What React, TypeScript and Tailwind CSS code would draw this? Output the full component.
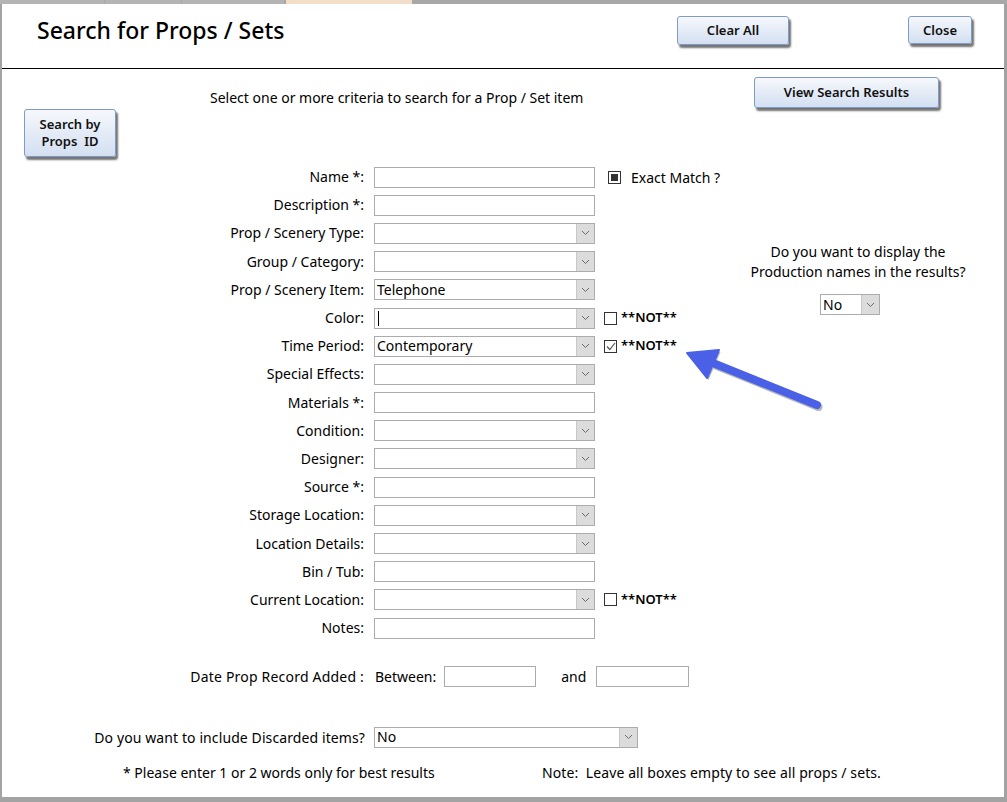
import React from 'react';

const font = "font-['Noto_Sans',sans-serif]";

function Chevron() {
  return (
    <svg width="9" height="6" viewBox="0 0 9 6" fill="none" stroke="#6b6b6b" strokeWidth="1">
      <path d="M1 1l3.5 3.5L8 1" />
    </svg>
  );
}

function TextBox({ w = 221 }: { w?: number }) {
  return <div className="h-[21px] border border-[#acacac] bg-white" style={{ width: w }} />;
}

function SelectBox({ w = 221, value, caret }: { w?: number; value?: string; caret?: boolean }) {
  return (
    <div className="flex h-[21px] border border-[#acacac] bg-white" style={{ width: w }}>
      <div className="flex flex-1 items-center pl-[2px] text-[14px] leading-none text-black">
        {caret && <span className="ml-[1px] h-[15px] w-px bg-black" />}
        {value}
      </div>
      <div className="flex w-[18px] items-center justify-center border-l border-[#c8c8c8] bg-[#dcdcdc]">
        <Chevron />
      </div>
    </div>
  );
}

function NotBox({ checked }: { checked?: boolean }) {
  return (
    <div className="ml-[9px] flex items-center gap-[4px]">
      <div className="flex h-[13px] w-[13px] items-center justify-center border border-[#333] bg-white">
        {checked && (
          <svg width="10" height="9" viewBox="0 0 10 9" fill="none" stroke="#555" strokeWidth="1.2">
            <path d="M1 4.5l2.8 3L9 1" />
          </svg>
        )}
      </div>
      <span className="text-[13px] font-semibold text-black">**NOT**</span>
    </div>
  );
}

function Btn({ children, className }: { children: React.ReactNode; className?: string }) {
  return (
    <div
      className={
        'flex items-center justify-center rounded-[3px] border border-[#7f9cc8] bg-linear-to-b from-[#f6f8fc] to-[#d3dff1] text-center text-[13px] font-semibold leading-[17px] text-[#111] shadow-[2px_3px_2px_rgba(0,0,0,0.55)] ' +
        (className ?? '')
      }
    >
      {children}
    </div>
  );
}

type RowDef = { label: string; kind: 'text' | 'select'; value?: string; extra?: 'exact' | 'not' | 'notChecked'; caret?: boolean };

const rows: RowDef[] = [
  { label: 'Name *:', kind: 'text', extra: 'exact' },
  { label: 'Description *:', kind: 'text' },
  { label: 'Prop / Scenery Type:', kind: 'select' },
  { label: 'Group / Category:', kind: 'select' },
  { label: 'Prop / Scenery Item:', kind: 'select', value: 'Telephone' },
  { label: 'Color:', kind: 'select', extra: 'not', caret: true },
  { label: 'Time Period:', kind: 'select', value: 'Contemporary', extra: 'notChecked' },
  { label: 'Special Effects:', kind: 'select' },
  { label: 'Materials *:', kind: 'text' },
  { label: 'Condition:', kind: 'select' },
  { label: 'Designer:', kind: 'select' },
  { label: 'Source *:', kind: 'text' },
  { label: 'Storage Location:', kind: 'select' },
  { label: 'Location Details:', kind: 'select' },
  { label: 'Bin / Tub:', kind: 'text' },
  { label: 'Current Location:', kind: 'select', extra: 'not' },
  { label: 'Notes:', kind: 'text' },
];

export default function App() {
  return (
    <div className={`relative flex h-[802px] w-[1007px] flex-col overflow-hidden bg-white text-[14px] text-black ${font}`}>
      {/* tab strip */}
      <div className="flex h-[4px] bg-[#a8a8a8]">
        <div className="w-[104px] bg-[#b4b4b4]" />
        <div className="ml-[1px] w-[76px] bg-[#b4b4b4]" />
        <div className="ml-[1px] w-[102px] bg-[#b4b4b4]" />
        <div className="ml-[2px] w-[126px] bg-[#f3dfc7]" />
      </div>

      <div className="flex flex-1 flex-col border-x-2 border-b-[5px] border-[#a3a3a3] border-r-[3px]">
        {/* header */}
        <div className="flex h-[65px] items-start border-b border-black">
          <h1 className="pl-[35px] pt-[11px] text-[23px] font-medium leading-[30px]">Search for Props / Sets</h1>
          <div className="flex-1" />
          <Btn className="mt-[12px] h-[29px] w-[112px]">Clear All</Btn>
          <Btn className="ml-[119px] mr-[32px] mt-[12px] h-[28px] w-[64px]">Close</Btn>
        </div>

        {/* intro */}
        <div className="grid h-[94px] grid-cols-[208px_544px_auto]">
          <div>
            <Btn className="ml-[22px] mt-[40px] h-[48px] w-[92px]">
              Search by
              <br />
              Props&nbsp; ID
            </Btn>
          </div>
          <div className="pt-[19px] leading-[20px]">Select one or more criteria to search for a Prop / Set item</div>
          <div>
            <Btn className="mt-[8px] h-[31px] w-[185px]">View Search Results</Btn>
          </div>
        </div>

        {/* form */}
        <div className="flex">
          <div className="flex w-[745px] flex-col">
            {rows.map((r) => (
              <div key={r.label} className="flex h-[28.2px] items-center">
                <div className="w-[362px] text-right leading-[20px]">{r.label}</div>
                <div className="ml-[10px]">
                  {r.kind === 'text' ? <TextBox /> : <SelectBox value={r.value} caret={r.caret} />}
                </div>
                {r.extra === 'exact' && (
                  <div className="ml-[13px] flex items-center gap-[10px]">
                    <div className="flex h-[13px] w-[13px] items-center justify-center border border-[#333] bg-white">
                      <div className="h-[7px] w-[7px] bg-[#333]" />
                    </div>
                    <span>Exact Match ?</span>
                  </div>
                )}
                {r.extra === 'not' && <NotBox />}
                {r.extra === 'notChecked' && <NotBox checked />}
              </div>
            ))}
          </div>
          <div className="flex w-[222px] flex-col items-center pt-[79px] text-center leading-[20px]">
            <div>Do you want to display the</div>
            <div>Production names in the results?</div>
            <div className="ml-[-16px] mt-[12px]">
              <SelectBox w={60} value="No" />
            </div>
          </div>
        </div>

        {/* date */}
        <div className="mt-[22px] flex h-[24px] items-center">
          <div className="w-[362px] text-right tracking-[0.2px]">Date Prop Record Added :</div>
          <div className="ml-[11px]">Between:</div>
          <div className="ml-[8px]">
            <TextBox w={92} />
          </div>
          <div className="ml-[25px]">and</div>
          <div className="ml-[10px]">
            <TextBox w={93} />
          </div>
        </div>

        {/* discarded */}
        <div className="mt-[38px] flex h-[22px] items-center">
          <div className="w-[363px] text-right tracking-[0.1px]">Do you want to include Discarded items?</div>
          <div className="ml-[9px]">
            <SelectBox w={264} value="No" />
          </div>
        </div>

        {/* notes */}
        <div className="mt-[14px] flex h-[20px] items-center">
          <div className="ml-[121px] w-[419px]">* Please enter 1 or 2 words only for best results</div>
          <div className="tracking-[0.1px]">Note:&nbsp; Leave all boxes empty to see all props / sets.</div>
        </div>
      </div>

      {/* annotation arrow */}
      <svg className="pointer-events-none absolute left-0 top-0" width="1007" height="802" viewBox="0 0 1007 802">
        <g opacity="0.35" transform="translate(1.5 2)">
          <line x1="817" y1="405" x2="708" y2="361" stroke="#333" strokeWidth="8" strokeLinecap="round" />
          <polygon points="687,353 719,350 707,378" fill="#333" />
        </g>
        <line x1="817" y1="405" x2="708" y2="361" stroke="#4a60e6" strokeWidth="8" strokeLinecap="round" />
        <polygon points="687,353 719,350 707,378" fill="#4a60e6" stroke="#4a60e6" strokeWidth="2" strokeLinejoin="round" />
      </svg>
    </div>
  );
}
